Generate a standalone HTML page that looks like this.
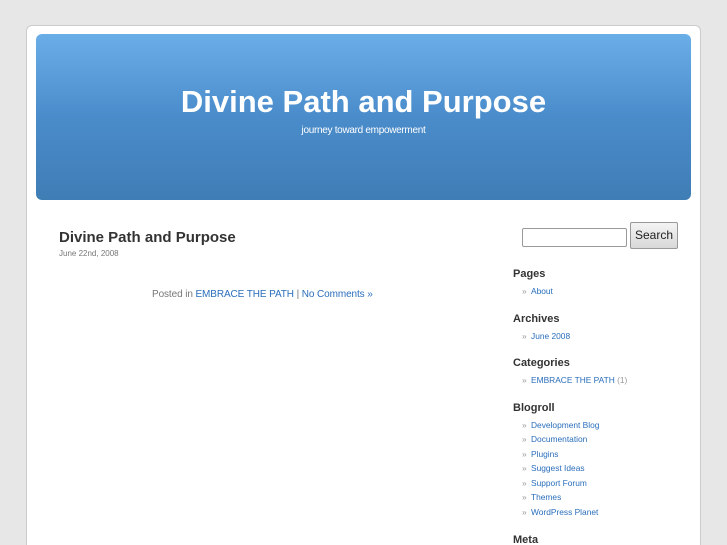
<!DOCTYPE html>
<html style="overflow:hidden"><head><style>
html,body{overflow:hidden}
body{margin:0;background:#e7e7e7;font-family:"Liberation Sans",sans-serif;width:727px;height:545px;position:relative}
.page{position:absolute;left:26px;top:25px;width:673px;height:540px;background:#fff;border:1px solid #ccc;border-radius:6px}
.hdr{position:absolute;left:36px;top:34px;width:655px;height:166px;border-radius:6px;background:linear-gradient(#6aaee8,#4a8ccb 50%,#3f7db5)}
.t{position:absolute;left:36px;width:655px;text-align:center;color:#fff}
a{color:#2a6ebb;text-decoration:none}
.abs{position:absolute;white-space:nowrap}
h2{position:absolute;left:513px;margin:0;font-size:11px;font-weight:bold;color:#333}
.li{position:absolute;left:522px;font-size:8.4px;color:#999}
.li a{margin-left:2px}
</style></head><body>
<div class="page"></div>
<div class="hdr"></div>
<div class="t" style="top:84px;font-size:31px;font-weight:bold">Divine Path and Purpose</div>
<div class="t" style="top:125px;font-size:10px;letter-spacing:-0.3px">journey toward empowerment</div>
<div class="abs" style="left:59px;top:229px;font-size:15px;font-weight:bold;color:#333">Divine Path and Purpose</div>
<div class="abs" style="left:59px;top:249px;font-size:8px;color:#777">June 22nd, 2008</div>
<div class="abs" style="left:152px;top:289px;font-size:10px;color:#777;letter-spacing:-0.1px">Posted in <a>EMBRACE THE PATH</a> | <a>No Comments »</a></div>
<div class="abs" style="left:522px;top:228px;width:103px;height:17px;border:1px solid #999;border-radius:2px"></div>
<div class="abs" style="left:630px;top:222px;width:46px;height:25px;border:1px solid #999;border-radius:2px;background:linear-gradient(#f4f4f4,#d8d8d8);font-size:12px;line-height:25px;text-align:center;color:#222">Search</div>
<h2 style="top:268px">Pages</h2>
<div class="li" style="top:286px">» <a>About</a></div>
<h2 style="top:313px">Archives</h2>
<div class="li" style="top:331px">» <a>June 2008</a></div>
<h2 style="top:357px">Categories</h2>
<div class="li" style="top:375px">» <a>EMBRACE THE PATH</a> (1)</div>
<h2 style="top:402px">Blogroll</h2>
<div class="li" style="top:420px">» <a>Development Blog</a></div>
<div class="li" style="top:434px">» <a>Documentation</a></div>
<div class="li" style="top:449px">» <a>Plugins</a></div>
<div class="li" style="top:463px">» <a>Suggest Ideas</a></div>
<div class="li" style="top:478px">» <a>Support Forum</a></div>
<div class="li" style="top:492px">» <a>Themes</a></div>
<div class="li" style="top:507px">» <a>WordPress Planet</a></div>
<h2 style="top:534px">Meta</h2>
</body></html>
